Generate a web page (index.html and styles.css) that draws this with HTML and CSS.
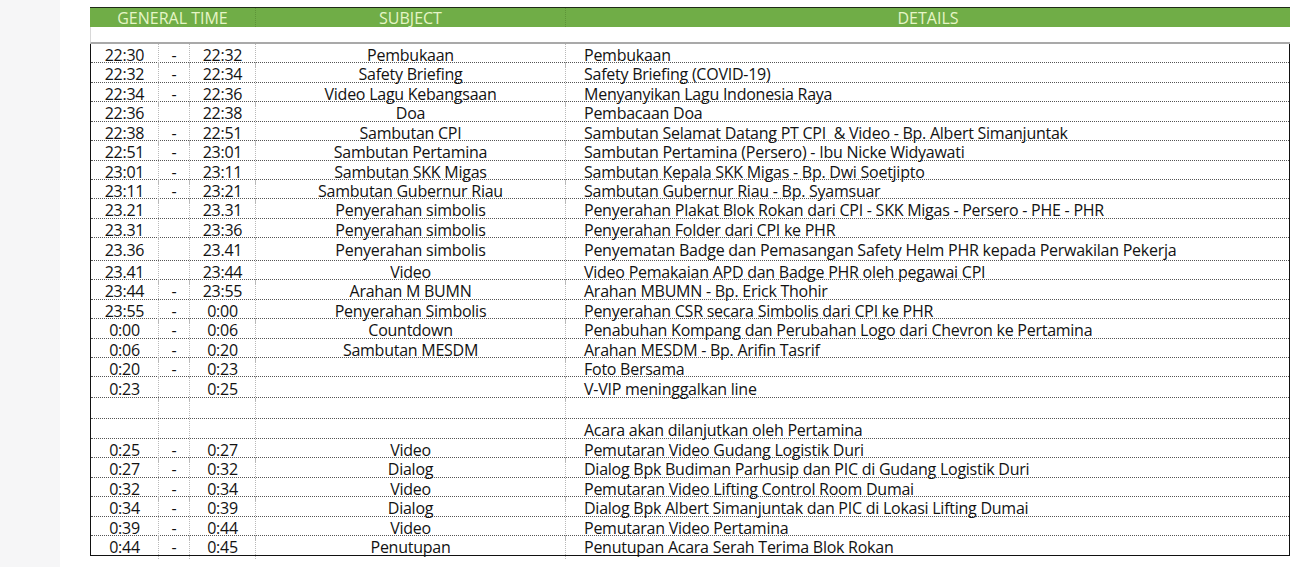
FILE: index.html
```html
<!DOCTYPE html>
<html>
<head>
<meta charset="utf-8">
<link rel="stylesheet" href="styles.css">
</head>
<body>
<div class="gutter"></div>
<div class="page">
  <div class="sheet">
    <div class="head">
      <div class="hcell time">GENERAL TIME</div>
      <div class="hcell subj">SUBJECT</div>
      <div class="hcell det">DETAILS</div>
    </div>
    <div class="spacer"></div>
    <div class="body">
      <div class="row"><span class="t1">22:30</span><span class="d">-</span><span class="t2">22:32</span><span class="s">Pembukaan</span><span class="x">Pembukaan</span></div>
      <div class="row"><span class="t1">22:32</span><span class="d">-</span><span class="t2">22:34</span><span class="s">Safety Briefing</span><span class="x">Safety Briefing (COVID-19)</span></div>
      <div class="row"><span class="t1">22:34</span><span class="d">-</span><span class="t2">22:36</span><span class="s">Video Lagu Kebangsaan</span><span class="x">Menyanyikan Lagu Indonesia Raya</span></div>
      <div class="row"><span class="t1">22:36</span><span class="d"></span><span class="t2">22:38</span><span class="s">Doa</span><span class="x">Pembacaan Doa</span></div>
      <div class="row"><span class="t1">22:38</span><span class="d">-</span><span class="t2">22:51</span><span class="s">Sambutan CPI</span><span class="x">Sambutan Selamat Datang PT CPI &nbsp;&amp; Video - Bp. Albert Simanjuntak</span></div>
      <div class="row"><span class="t1">22:51</span><span class="d">-</span><span class="t2">23:01</span><span class="s">Sambutan Pertamina</span><span class="x">Sambutan Pertamina (Persero) - Ibu Nicke Widyawati</span></div>
      <div class="row"><span class="t1">23:01</span><span class="d">-</span><span class="t2">23:11</span><span class="s">Sambutan SKK Migas</span><span class="x">Sambutan Kepala SKK Migas - Bp. Dwi Soetjipto</span></div>
      <div class="row"><span class="t1">23:11</span><span class="d">-</span><span class="t2">23:21</span><span class="s">Sambutan Gubernur Riau</span><span class="x">Sambutan Gubernur Riau - Bp. Syamsuar</span></div>
      <div class="row"><span class="t1">23.21</span><span class="d"></span><span class="t2">23.31</span><span class="s">Penyerahan simbolis</span><span class="x">Penyerahan Plakat Blok Rokan dari CPI - SKK Migas - Persero - PHE - PHR</span></div>
      <div class="row"><span class="t1">23.31</span><span class="d"></span><span class="t2">23:36</span><span class="s">Penyerahan simbolis</span><span class="x">Penyerahan Folder dari CPI ke PHR</span></div>
      <div class="row tall"><span class="t1">23.36</span><span class="d"></span><span class="t2">23.41</span><span class="s">Penyerahan simbolis</span><span class="x">Penyematan Badge dan Pemasangan Safety Helm PHR kepada Perwakilan Pekerja</span></div>
      <div class="row"><span class="t1">23.41</span><span class="d"></span><span class="t2">23:44</span><span class="s">Video</span><span class="x">Video Pemakaian APD dan Badge PHR oleh pegawai CPI</span></div>
      <div class="row"><span class="t1">23:44</span><span class="d">-</span><span class="t2">23:55</span><span class="s">Arahan M BUMN</span><span class="x">Arahan MBUMN - Bp. Erick Thohir</span></div>
      <div class="row"><span class="t1">23:55</span><span class="d">-</span><span class="t2">0:00</span><span class="s">Penyerahan Simbolis</span><span class="x">Penyerahan CSR secara Simbolis dari CPI ke PHR</span></div>
      <div class="row"><span class="t1">0:00</span><span class="d">-</span><span class="t2">0:06</span><span class="s">Countdown</span><span class="x">Penabuhan Kompang dan Perubahan Logo dari Chevron ke Pertamina</span></div>
      <div class="row"><span class="t1">0:06</span><span class="d">-</span><span class="t2">0:20</span><span class="s">Sambutan MESDM</span><span class="x">Arahan MESDM - Bp. Arifin Tasrif</span></div>
      <div class="row"><span class="t1">0:20</span><span class="d">-</span><span class="t2">0:23</span><span class="s"></span><span class="x">Foto Bersama</span></div>
      <div class="row mid"><span class="t1">0:23</span><span class="d"></span><span class="t2">0:25</span><span class="s"></span><span class="x">V-VIP meninggalkan line</span></div>
      <div class="row mid"><span class="t1"></span><span class="d"></span><span class="t2"></span><span class="s"></span><span class="x"></span></div>
      <div class="row"><span class="t1"></span><span class="d"></span><span class="t2"></span><span class="s"></span><span class="x">Acara akan dilanjutkan oleh Pertamina</span></div>
      <div class="row"><span class="t1">0:25</span><span class="d">-</span><span class="t2">0:27</span><span class="s">Video</span><span class="x">Pemutaran Video Gudang Logistik Duri</span></div>
      <div class="row"><span class="t1">0:27</span><span class="d">-</span><span class="t2">0:32</span><span class="s">Dialog</span><span class="x">Dialog Bpk Budiman Parhusip dan PIC di Gudang Logistik Duri</span></div>
      <div class="row"><span class="t1">0:32</span><span class="d">-</span><span class="t2">0:34</span><span class="s">Video</span><span class="x">Pemutaran Video Lifting Control Room Dumai</span></div>
      <div class="row"><span class="t1">0:34</span><span class="d">-</span><span class="t2">0:39</span><span class="s">Dialog</span><span class="x">Dialog Bpk Albert Simanjuntak dan PIC di Lokasi Lifting Dumai</span></div>
      <div class="row"><span class="t1">0:39</span><span class="d">-</span><span class="t2">0:44</span><span class="s">Video</span><span class="x">Pemutaran Video Pertamina</span></div>
      <div class="row last"><span class="t1">0:44</span><span class="d">-</span><span class="t2">0:45</span><span class="s">Penutupan</span><span class="x">Penutupan Acara Serah Terima Blok Rokan</span></div>
    </div>
  </div>
</div>
</body>
</html>
```
FILE: styles.css
```css
html, body {
  margin: 0;
  padding: 0;
  background: #ffffff;
}
body {
  display: flex;
  width: 1305px;
  height: 567px;
  overflow: hidden;
  font-family: "Open Sans", "Noto Sans", sans-serif;
  color: #121212;
}
.gutter {
  width: 60px;
  flex: none;
  background: #f6f6f7;
}
.page {
  flex: none;
  padding: 7px 0 0 30px;
}
.sheet {
  width: 1200px;
}
.head {
  display: grid;
  grid-template-columns: 166px 310px 1fr;
  height: 20px;
  box-sizing: border-box;
  border-top: 1px solid #1f2a18;
  background: #70ad47;
  color: #e6f5c6;
  font-size: 16px;
  line-height: 21px;
}
.hcell {
  text-align: center;
  border-right: 1px dotted #5e9438;
  height: 19px;
}
.hcell.det {
  border-right: none;
}
.spacer {
  height: 15px;
  border-bottom: 2px solid #a9a9a9;
  border-left: 1px solid #d8d8d8;
}
.body {
  border: 1px solid #111;
  border-top: none;
}
.row {
  display: grid;
  grid-template-columns: 68px 31px 66px 310px 1fr;
  height: 19.43px;
  box-sizing: border-box;
  border-bottom: 1px dotted #555;
  font-size: 16px;
  letter-spacing: -0.25px;
  line-height: 23px;
}
.row.tall {
  height: 22.7px;
  line-height: 24px;
}
.row.mid {
  height: 21px;
  line-height: 24px;
}
.row.last {
  border-bottom: none;
}
.row > span {
  border-right: 1px dotted #b9b9b9;
  white-space: pre;
}
.t1, .d, .t2, .s {
  text-align: center;
}
.row > .x {
  border-right: none;
  padding-left: 18px;
}
```
